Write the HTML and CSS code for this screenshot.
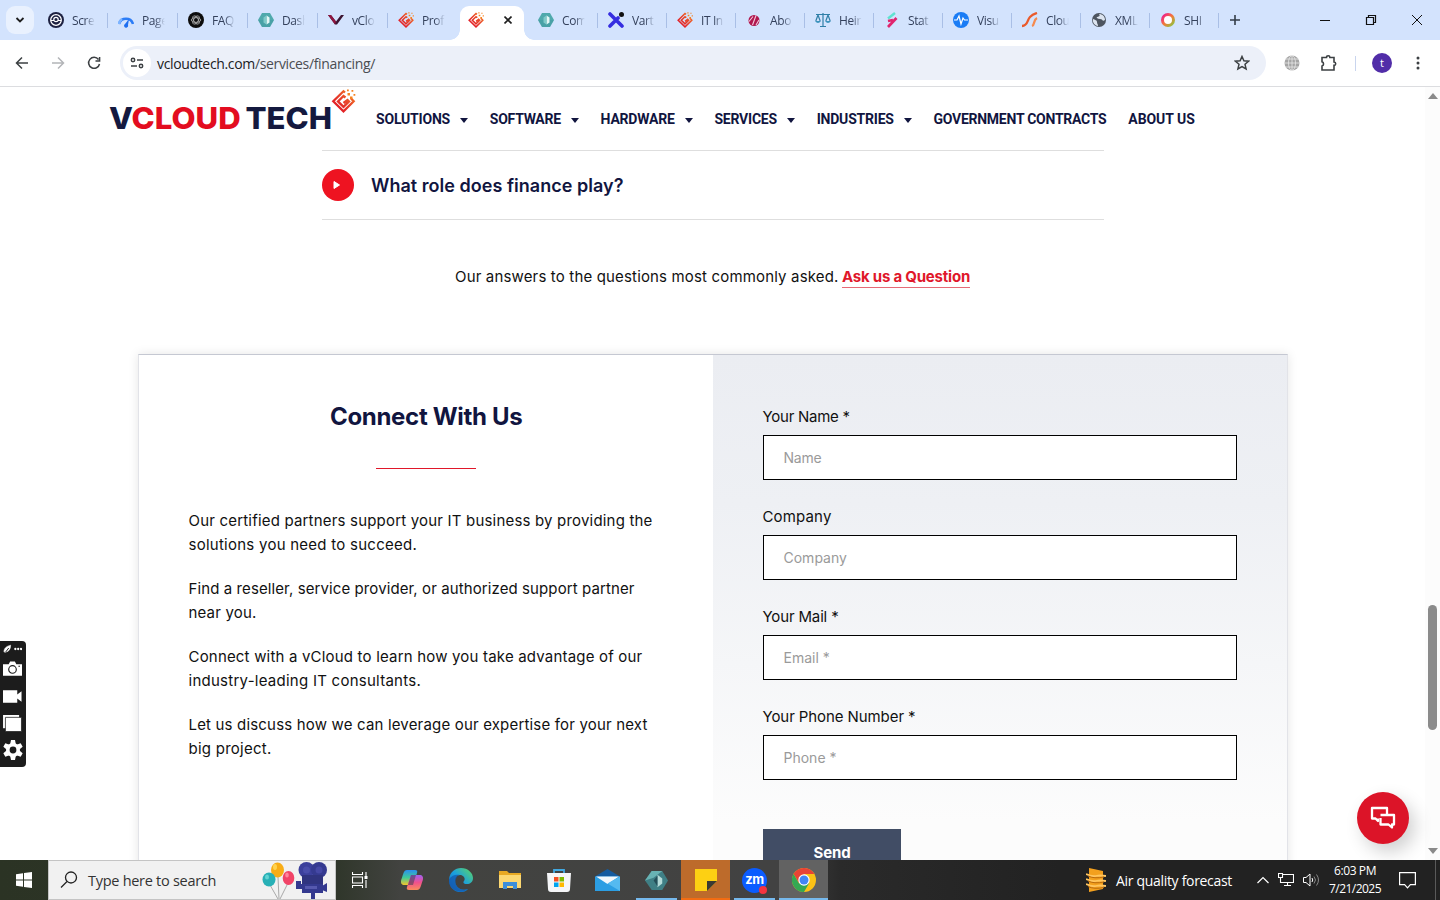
FILE: index.html
```html
<!DOCTYPE html>
<html lang="en">
<head>
<meta charset="utf-8">
<title>vCloud Tech Financing</title>
<link rel="stylesheet" href="styles.css">
</head>
<body>
<svg width="0" height="0" class="defs">
  <defs>
    <linearGradient id="gRed" gradientUnits="userSpaceOnUse" x1="4" y1="20" x2="22" y2="2"><stop offset="0" stop-color="#e01425"/><stop offset=".5" stop-color="#e8442a"/><stop offset="1" stop-color="#f58220"/></linearGradient>
    <linearGradient id="gEdge" x1="0" y1="1" x2="1" y2="0"><stop offset="0" stop-color="#0f62b8"/><stop offset=".5" stop-color="#1a9fe0"/><stop offset="1" stop-color="#5fd860"/></linearGradient>
    <linearGradient id="gCopA" x1="0" y1="0" x2="0" y2="1"><stop offset="0" stop-color="#2a8ef0"/><stop offset=".5" stop-color="#3fc99a"/><stop offset="1" stop-color="#f4c62a"/></linearGradient>
    <linearGradient id="gCopB" x1="0" y1="0" x2="0" y2="1"><stop offset="0" stop-color="#a160f2"/><stop offset=".5" stop-color="#f0508c"/><stop offset="1" stop-color="#f98b5c"/></linearGradient>
    <linearGradient id="gShi" x1="0" y1="0" x2="1" y2="1"><stop offset="0" stop-color="#ee1490"/><stop offset=".5" stop-color="#f47a3a"/><stop offset="1" stop-color="#8cc63f"/></linearGradient>
    <symbol id="vct" viewBox="0 0 24 24"><g fill="none" stroke="url(#gRed)" stroke-width="2.300"><path d="M13.500 3.500 12 2.200 1.800 12.300 12 22.300 22.200 12.300 19.500 9.500"/><path d="M14 8.500 12 7 6.500 12.400 12 17.800 17.500 12.400 16 11l-4 3"/></g><path fill="#f58220" d="M16 4h2.500v2.500H16zM20 1h1.800v1.800H20zM18.500 7.500H21V10h-2.500zM22 5h1.800v1.800H22zM15.500.500h1.800v1.800h-1.800z"/></symbol>
    <symbol id="hex" viewBox="0 0 16 16"><path fill="#4fa9ac" d="M4 1h8l4 7-4 7H4L0 8z"/><path fill="#3c8f98" d="M0 8l4 7h8l4-7z" opacity=".3"/><path fill="#e5f7f5" d="M8.500 3.500 11.500 5.500v5l-3 2z"/><path fill="#80c9c8" d="M8.500 3.500 5.500 5.500v5l3 2z"/></symbol>
  </defs>
</svg>
<div class="screen">
  <div class="tabstrip">
    <div class="tabsearch"><svg width="10" height="6" viewBox="0 0 10 6"><path d="m1.500 1 3.500 3.500L8.500 1" fill="none" stroke="#1f1f1f" stroke-width="1.800"/></svg></div>
    <div class="tab"><svg viewBox="0 0 16 16"><circle cx="8" cy="8" r="8" fill="#1d2141"/><circle cx="8" cy="8" r="5.300" fill="none" stroke="#fff" stroke-width="1.300"/><circle cx="8" cy="7.500" r="2.200" fill="none" stroke="#fff" stroke-width="1.200"/><path d="M3 8.500h3M10 8.500h3" stroke="#fff"/></svg><span>Scre</span></div>
    <div class="tab"><svg viewBox="0 0 16 16"><path d="M1 12a7.300 7.300 0 0 1 14 0" fill="none" stroke="#2c7df7" stroke-width="2.600"/><path d="M1 12a7 7 0 0 1 3-5" fill="none" stroke="#7db4ff" stroke-width="2.600"/><path d="m11 7-1 6a2 2 0 1 1-3-1z" fill="#1f6ff0"/></svg><span>Page</span></div>
    <div class="tab"><svg viewBox="0 0 16 16"><circle cx="8" cy="8" r="8" fill="#0d0d0d"/><g fill="none" stroke="#c8c8c8" stroke-width=".7"><ellipse cx="8" cy="8" rx="4.700" ry="2.300"/><ellipse cx="8" cy="8" rx="4.700" ry="2.300" transform="rotate(60 8 8)"/><ellipse cx="8" cy="8" rx="4.700" ry="2.300" transform="rotate(120 8 8)"/></g></svg><span>FAQ</span></div>
    <div class="tab"><svg><use href="#hex"/></svg><span>Dash</span></div>
    <div class="tab"><svg viewBox="0 0 16 16"><path d="M0 3h3l5 6.500L13 3h3L9 12.500H7z" fill="#3c1532"/><path d="M0 3h3l5 6.500-1 3z" fill="#8e1640"/></svg><span>vClo</span></div>
    <div class="tab"><svg><use href="#vct"/></svg><span>Prof</span></div>
    <div class="tab active"><div class="shape"><svg><use href="#vct"/></svg><svg class="x" viewBox="0 0 8 8"><path d="m.5.500 7 7m0-7-7 7" stroke="#1f1f1f" stroke-width="1.600"/></svg></div></div>
    <div class="tab"><svg><use href="#hex"/></svg><span>Com</span></div>
    <div class="tab n"><svg viewBox="0 0 16 16"><path d="m2 2 12 12M10 6 2 14" stroke="#352de0" stroke-width="3.600" stroke-linecap="round"/><circle cx="13.500" cy="2.500" r="2.500" fill="#111"/></svg><span>Vart</span></div>
    <div class="tab n"><svg><use href="#vct"/></svg><span>IT In</span></div>
    <div class="tab n"><svg viewBox="0 0 16 16"><circle cx="8" cy="8.500" r="5.500" fill="#b0174e"/><path d="m3 9.500 4-5M6.500 13l3.500-9.500M10 13l3-5" stroke="#f2c9dc" stroke-width="1.100" fill="none"/></svg><span>Abo</span></div>
    <div class="tab n"><svg viewBox="0 0 16 16"><g fill="none" stroke="#2f7fa8" stroke-width="1.200"><path d="M8 1v13M1 2.500h14M5 14.500h6M3 3 .8 9M3 3l2.200 6M13 3l-2.200 6M13 3l2.200 6"/></g><path d="M0 9h6q-3 4-6 0zM10 9h6q-3 4-6 0z" fill="#3b93bd"/></svg><span>Heir</span></div>
    <div class="tab n"><svg viewBox="0 0 16 16"><path d="M11 1 4 6.500" stroke="#5fe3d0" stroke-width="2.500"/><path d="M4 9 9 8M12.500 6 4 15" stroke="#e0246e" stroke-width="2.700"/></svg><span>Stat</span></div>
    <div class="tab n"><svg viewBox="0 0 16 16"><circle cx="8" cy="8" r="8" fill="#1a7cf5"/><path d="M1 8h3l2-4 2 8 2-6 1.500 2H15" fill="none" stroke="#fff" stroke-width="1.200"/></svg><span>Visu</span></div>
    <div class="tab n"><svg viewBox="0 0 16 16"><path d="M0 14c6 0 5-6 8-9s4-3 7-4" fill="none" stroke="#ea5a2b" stroke-width="2.300"/><path d="M10 14c3-1 1-6 5-8" fill="none" stroke="#f58a4e" stroke-width="2.300"/></svg><span>Clou</span></div>
    <div class="tab n"><svg viewBox="0 0 16 16"><circle cx="8" cy="8" r="7" fill="#4d5560"/><path d="M8 2c2 2-1 3-2 3s0 2 3 2 2 3 5 1c0-4-3-6-6-6zM2 7c2 1 4 1 4 3s1 2 1 4C4 14 1 10 2 7z" fill="#dce4ef"/></svg><span>XML</span></div>
    <div class="tab n"><svg viewBox="0 0 16 16"><circle cx="8" cy="8" r="5.500" fill="#fff" stroke="url(#gShi)" stroke-width="3"/></svg><span>SHI</span></div>
    <svg class="plus" viewBox="0 0 10 10"><path d="M5 0v10M0 5h10" stroke="#333c48" stroke-width="1.600"/></svg>
    <div class="wincontrols">
      <svg viewBox="0 0 12 12"><path d="M1 6.500h10" stroke="#111"/></svg>
      <svg viewBox="0 0 12 12"><path d="M1.500 3.500h7v7h-7zM3.500 3.500v-2h7v7h-2" fill="none" stroke="#111" stroke-width="1.200"/></svg>
      <svg viewBox="0 0 12 12"><path d="m1 1 10 10M11 1 1 11" stroke="#111"/></svg>
    </div>
  </div>
  <div class="toolbar">
    <div class="navbtns">
      <svg viewBox="0 0 14 14"><path d="M13 7H2m5-5.500L1.500 7 7 12.500" fill="none" stroke="#3c4043" stroke-width="1.500"/></svg>
      <svg viewBox="0 0 14 14"><path d="M1 7h11M7 1.500 12.500 7 7 12.500" fill="none" stroke="#b3b5b8" stroke-width="1.500"/></svg>
      <svg viewBox="0 0 14 14"><path d="M11.500 3.500A5.500 5.500 0 1 0 12.500 8M12.600 1v4H8.500" fill="none" stroke="#3c4043" stroke-width="1.500"/></svg>
    </div>
    <div class="omnibox">
      <div class="tune"><svg width="14" height="12" viewBox="0 0 14 12"><g fill="none" stroke="#3c4043" stroke-width="1.500"><circle cx="3" cy="3" r="1.700"/><path d="M7 3h6M1 9h6"/><circle cx="11" cy="9" r="1.700"/></g></svg></div>
      <span class="url"><b>vcloudtech.com</b>/services/financing/</span>
      <svg class="star" viewBox="0 0 16 16"><path d="m8 1.500 1.900 4.300 4.700.4-3.600 3.100 1.100 4.600L8 11.500l-4.100 2.400L5 9.300 1.400 6.200l4.700-.4z" fill="none" stroke="#3c4043" stroke-width="1.500"/></svg>
    </div>
    <div class="exts">
      <svg class="globe" viewBox="0 0 16 16"><circle cx="8" cy="8" r="7.500" fill="#a5a5a5"/><g fill="none" stroke="#e9e9e9" stroke-width=".8"><ellipse cx="8" cy="8" rx="3.500" ry="7.500"/><path d="M8 0v16M0 8h16M1 4h14M1 12h14"/></g></svg>
      <svg class="puzzle" viewBox="0 0 18 18"><path d="M2 3.500h4.500a1.700 1.700 0 0 1 3.400 0H14v4.500a1.700 1.700 0 0 1 0 3.400V16H2v-4a2.200 2.200 0 0 0 0-4.200z" fill="none" stroke="#3c4043" stroke-width="1.600"/></svg>
      <i class="vbar"></i>
      <div class="avatar">t</div>
      <svg class="dots" viewBox="0 0 4 14"><g fill="#3c4043"><circle cx="2" cy="2" r="1.500"/><circle cx="2" cy="7" r="1.500"/><circle cx="2" cy="12" r="1.500"/></g></svg>
    </div>
  </div>
  <div class="viewport">
    <main class="page">
      <header class="site">
        <svg class="logo" width="248" height="44" viewBox="0 0 248 44">
          <text class="wordmark" x="0" y="40" textLength="223" lengthAdjust="spacingAndGlyphs"><tspan class="navy">V</tspan><tspan class="red">CLOUD</tspan><tspan class="navy" dx="-2"> TECH</tspan></text>
          <use href="#vct" x="222" y="0" width="25" height="24"/>
        </svg>
        <nav>
          <a><span class="n1">SOLUTIONS</span><i></i></a>
          <a><span class="n2">SOFTWARE</span><i></i></a>
          <a><span class="n3">HARDWARE</span><i></i></a>
          <a><span class="n4">SERVICES</span><i></i></a>
          <a><span class="n5">INDUSTRIES</span><i></i></a>
          <a><span class="n6">GOVERNMENT CONTRACTS</span></a>
          <a><span class="n7">ABOUT US</span></a>
        </nav>
      </header>
      <section class="faq">
        <div class="play"><svg width="8" height="10" viewBox="0 0 8 10"><path d="M1 1.500v7L6.500 5z" fill="#fff" stroke="#fff" stroke-linejoin="round"/></svg></div>
        <h3>What role does finance play?</h3>
      </section>
      <p class="ask"><span>Our answers to the questions most commonly asked.</span><a>Ask us a Question</a></p>
      <section class="card">
        <div class="left">
          <h2>Connect With Us</h2>
          <hr>
          <p><span class="l1">Our certified partners support your IT business by providing the</span><br><span class="l2">solutions you need to succeed.</span></p>
          <p><span class="l3">Find a reseller, service provider, or authorized support partner</span><br><span class="l4">near you.</span></p>
          <p><span class="l1">Connect with a vCloud to learn how you take advantage of our</span><br><span class="l2">industry-leading IT consultants.</span></p>
          <p><span class="l4">Let us discuss how we can leverage our expertise for your next</span><br><span class="l2">big project.</span></p>
        </div>
        <form class="right">
          <label class="f1">Your Name *</label><div class="field f1">Name</div>
          <label class="f2">Company</label><div class="field">Company</div>
          <label class="f3">Your Mail *</label><div class="field">Email *</div>
          <label class="f4">Your Phone Number *</label><div class="field">Phone *</div>
          <div class="send">Send</div>
        </form>
      </section>
    </main>
    <div class="scrollbar"><i class="up"></i><i class="thumb"></i><i class="down"></i></div>
    <div class="chat"><svg width="26" height="24" viewBox="0 0 26 24"><g fill="none" stroke="#fff" stroke-width="2.300" stroke-linejoin="round"><path d="M8 12.500v2.500L5.500 12.500H2V2h15v6"/><path d="M10.500 9H24v9.500h-2v3l-3.500-3h-8V12"/></g></svg></div>
  </div>
  <div class="recorder">
    <svg viewBox="0 0 20 10" class="r1"><path d="M1 8c0-4 3-6 7-7 0 4-2 7-5 7zM2 9l4-5" fill="#fff" stroke="#fff" stroke-width=".6"/><path d="m3 8 3-4" stroke="#1c1c1c"/><g fill="#fff"><circle cx="13" cy="5" r="1.200"/><circle cx="16" cy="5" r="1.200"/><circle cx="19" cy="5" r="1.200"/></g></svg>
    <svg viewBox="0 0 20 16"><path d="M0 3h6l1.500-3h5L14 3h6v12H0z" fill="#fff"/><circle cx="10" cy="8.500" r="4" fill="none" stroke="#1c1c1c" stroke-width="1.200"/><circle cx="17" cy="5" r=".8" fill="#1c1c1c"/></svg>
    <svg viewBox="0 0 20 16"><path d="M0 2h15v4.500L19.500 3v11L15 10.500V15H0z" fill="#fff"/></svg>
    <svg viewBox="0 0 20 18" class="r4"><path d="M0 0h17v14H0z" fill="#fff"/><path d="M2.500 2.500h17v15h-17z" fill="#fff" stroke="#1c1c1c" stroke-width=".8"/></svg>
    <svg viewBox="0 0 20 20" class="r5"><g fill="#fff"><circle cx="10" cy="10" r="7"/><path d="M8 0h4l1 5H7zM8 20h4l1-5H7z"/><path d="M8 0h4l1 5H7zM8 20h4l1-5H7z" transform="rotate(60 10 10)"/><path d="M8 0h4l1 5H7zM8 20h4l1-5H7z" transform="rotate(120 10 10)"/></g><circle cx="10" cy="10" r="3.400" fill="#1c1c1c"/></svg>
  </div>
  <footer class="taskbar">
    <div class="start"><svg width="16" height="16" viewBox="0 0 16 16"><path d="M0 2.200 7 1.200V7.500H0zM8 1 16 0v7.500H8zM0 8.500h7v6.300L0 13.800zM8 8.500h8V16l-8-1z" fill="#fff"/></svg></div>
    <div class="search">
      <svg width="18" height="18" viewBox="0 0 18 18"><circle cx="11" cy="6.500" r="5.500" fill="none" stroke="#222" stroke-width="1.300"/><path d="m7 10.500-6 6" stroke="#222" stroke-width="1.300"/></svg>
      <span>Type here to search</span>
      <svg class="party" width="66" height="38" viewBox="0 0 66 38">
        <path d="m16 16 1 22M8 24l8 14M26 22l-8 16" fill="none" stroke="#a9a9a9"/>
        <ellipse cx="15.500" cy="9" rx="6.500" ry="7.500" fill="#f8ad16"/><ellipse cx="7" cy="18.500" rx="6.500" ry="7" fill="#28b0b6"/><ellipse cx="26.500" cy="17" rx="5.800" ry="7" fill="#f14468"/>
        <ellipse cx="13" cy="6" rx="2" ry="3" fill="#ffd34e"/><ellipse cx="5" cy="16" rx="2" ry="2.500" fill="#62d4d3"/><ellipse cx="25" cy="14" rx="1.800" ry="2.500" fill="#ff869c"/>
        <path d="M34 20h5v3h22v9H40v-4h-6zM60 25l5-3v9l-5-2zM49 31h4v7h-4z" fill="#34398f"/><circle cx="44.500" cy="9" r="8" fill="#3c409c"/><circle cx="57" cy="9" r="8" fill="#353a90"/><path d="M40 14h21v9H40z" fill="#30347f"/><circle cx="44.500" cy="9" r="3.500" fill="#4a4eab"/><circle cx="57" cy="9" r="3.500" fill="#4548a5"/><path d="M43 25h12v3H43z" fill="#5659ae"/>
      </svg>
    </div>
    <div class="slot tv"><svg width="16" height="18" viewBox="0 0 16 18"><g fill="none" stroke="#fff" stroke-width="1.100"><path d="M.5 1v2.500h10V1M.5 17v-2.500h10V17M.5 6h10v6H.5zM14 1v4M14 9v8"/></g><path d="M12.500 5h3v3h-3z" fill="#fff"/></svg></div>
    <div class="slot"><svg width="24" height="24" viewBox="0 0 24 24"><path d="M7 2h8q3 0 2 3l-4 12H4.500C1.500 17 .5 15 1.200 12L3.500 5Q4.500 2 7 2z" fill="url(#gCopA)"/><path d="M17 22H9q-3 0-2-3l4-12h8.500c3 0 4 2 3.300 5l-2.300 7q-1 3-3.500 3z" fill="url(#gCopB)"/><path d="M11 7h5l-3 10H8z" fill="#3b3f52" opacity=".55"/></svg></div>
    <div class="slot"><svg width="24" height="24" viewBox="0 0 24 24"><path d="M0 11C1 4 6 0 12 0c7 0 12 5 12 10 0 4-3 6-6 6-4 0-4-2-3-3 2-3-1-6-4-6-5 0-6 6-4 10 2 4 7 6 12 4-5 6-19 4-19-10z" fill="url(#gEdge)"/><path d="M7 11c-2 6 3 13 12 10-7 7-21 0-19-10 3-4 7-5 11-4-2 0-3 1-4 4z" fill="#1458ae" opacity=".75"/></svg></div>
    <div class="slot"><svg width="22" height="20" viewBox="0 0 22 20"><path d="M0 1h8l2 2h12v15H0z" fill="#e8a923"/><path d="M0 5h22v13H0z" fill="#fcd872"/><path d="M4 19v-7h14v7h-4v-3H8v3z" fill="#3d8fdb"/></svg></div>
    <div class="slot"><svg width="24" height="24" viewBox="0 0 24 24"><path d="M7 6V2h10v4" fill="none" stroke="#41a8e0" stroke-width="1.800"/><path d="M0 5h24l-1 16q0 3-3 3H4q-3 0-3-3z" fill="#f5f6f8"/><path d="M7 9h4.500v4.500H7z" fill="#f25022"/><path d="M12.500 9H17v4.500h-4.500z" fill="#7fba00"/><path d="M7 14.500h4.500V19H7z" fill="#00a4ef"/><path d="M12.500 14.500H17V19h-4.500z" fill="#ffb900"/></svg></div>
    <div class="slot"><svg width="25" height="22" viewBox="0 0 25 22"><path d="M0 7.500 12.500 0 25 7.500V22H0z" fill="#155b9f"/><path d="M0 22V7.500h25V22z" fill="#2c9ee3"/><path d="M1 7.500h23L12.500 15z" fill="#f2f7fb"/><path d="M25 7.500V22L12.500 14.500z" fill="#55baf0"/></svg></div>
    <div class="slot run"><svg width="23" height="23" viewBox="0 0 24 24"><path d="M7 2h11l6 10-6 10H7L0 12z" fill="#3f7f85"/><path d="m0 12 7-10h11L9 9z" fill="#68b3b4"/><path d="m13 6 5 4v5l-5 4z" fill="#b5dbd9"/><path d="m13 7-4 5 4 6z" fill="#244f59"/></svg></div>
    <div class="slot sticky"><svg width="22" height="22" viewBox="0 0 22 22"><path d="M0 0h22v12L12 22H0z" fill="#fdd013"/><path d="M12 22V12h10z" fill="#3b3a32"/></svg></div>
    <div class="slot run"><div class="zm">zm<i></i></div></div>
    <div class="slot chrome"><svg width="24" height="24" viewBox="0 0 24 24"><circle cx="12" cy="12" r="12" fill="#fbc116"/><path d="M1.600 6A12 12 0 0 1 22.400 6H12L7 15z" fill="#e94335"/><path d="M1.600 6A12 12 0 0 0 12 24l5.200-9-5.200 2-5.200-2z" fill="#34a853"/><circle cx="12" cy="12" r="5.700" fill="#fff"/><circle cx="12" cy="12" r="4.500" fill="#4285f4"/></svg></div>
    <div class="weather"><svg width="20" height="24" viewBox="0 0 20 24"><path d="m3 0 14 3v18L3 24z" fill="#f3a01e"/><path d="M0 6q6 3 10 2t10 0M0 11q6 3 10 2t10 0M0 16q6 3 10 2t10 0" stroke="#ffc661" stroke-width="1.800" fill="none"/><path d="M2 8q6 3 16 1M2 13q6 3 16 1M2 18.500q6 3 16 1" stroke="#b96a0d" fill="none"/></svg><span>Air quality forecast</span></div>
    <div class="tray">
      <svg width="12" height="8" viewBox="0 0 12 8"><path d="m.5 7 5.500-5.500L11.500 7" fill="none" stroke="#fff" stroke-width="1.200"/></svg>
      <svg width="16" height="14" viewBox="0 0 16 14"><path d="M4.500 1.500h11v8h-11M9.500 9.500v3M6 12.500h7M.5.500h4v4h-4zM2.500 4.500v5h2" fill="none" stroke="#fff" stroke-width="1.100"/></svg>
      <svg width="17" height="14" viewBox="0 0 17 14"><path d="M.5 4.500h2.500l4-3.500v12l-4-3.500H.5z" fill="none" stroke="#fff"/><path d="M9 5q1.500 2 0 4" fill="none" stroke="#fff"/><path d="M11 3.500q3 3.500 0 7M13.500 1.500q4 5.500 0 11" fill="none" stroke="#888"/></svg>
    </div>
    <div class="clock"><span class="time">6:03 PM</span><br><span class="date">7/21/2025</span></div>
    <svg class="notif" width="17" height="17" viewBox="0 0 17 17"><path d="M.6.600h15.800v12h-5L8.500 15.800 5.600 12.600h-5z" fill="none" stroke="#fff" stroke-width="1.200"/></svg>
    <i class="peek"></i>
  </footer>
</div>
</body>
</html>
```
FILE: styles.css
```css
* { box-sizing: border-box; }
body { margin: 0; }
.defs { position: absolute; }
.screen { width: 1440px; height: 900px; display: flex; flex-direction: column; overflow: hidden; position: relative; background: #fff; font-family: "Open Sans", "Noto Sans", sans-serif; }

.tabstrip { height: 40px; flex: none; display: flex; align-items: center; background: #d3e3fd; padding-left: 6px; }
.tabsearch { width: 28px; height: 28px; margin-right: 4px; border-radius: 9px; background: #e9f1fe; display: flex; align-items: center; justify-content: center; }
.tab { width: 70px; height: 40px; flex: none; display: flex; align-items: center; padding-left: 10px; position: relative; }
.tab.n { width: 69px; }
.tab svg { width: 16px; height: 16px; flex: none; }
.tab span { width: 23px; margin-left: 8px; overflow: hidden; white-space: nowrap; font-size: 12px; letter-spacing: -.4px; color: #34415c; -webkit-mask-image: linear-gradient(90deg, #000 55%, transparent); mask-image: linear-gradient(90deg, #000 55%, transparent); }
.tab::after { content: ""; position: absolute; right: 0; top: 13px; width: 1px; height: 15px; background: #a9bfe6; }
.tab:nth-child(7)::after, .tab.active::after { display: none; }
.tab.active { padding-left: 2px; align-items: flex-end; }
.shape { width: 64px; height: 34px; background: #fff; border-radius: 9px 9px 0 0; display: flex; align-items: center; padding: 0 12px 6px 8px; justify-content: space-between; position: relative; }
.shape::before, .shape::after { content: ""; position: absolute; bottom: 0; width: 10px; height: 10px; }
.shape::before { left: -10px; background: radial-gradient(circle at 0 0, transparent 9.500px, #fff 10px); }
.shape::after { right: -10px; background: radial-gradient(circle at 100% 0, transparent 9.500px, #fff 10px); }
.shape .x { width: 8px; height: 8px; }
.plus { width: 10px; height: 10px; margin-left: 11px; }
.wincontrols { margin-left: auto; display: flex; gap: 34px; padding-right: 17px; }
.wincontrols svg { width: 12px; height: 12px; }

.toolbar { height: 47px; flex: none; display: flex; align-items: center; background: #fff; border-bottom: 1px solid #dcdde0; padding-left: 15px; }
.navbtns { display: flex; gap: 22px; width: 105px; }
.navbtns svg { width: 14px; height: 14px; }
.omnibox { width: 1146px; height: 34px; border-radius: 17px; background: #ecf0f9; display: flex; align-items: center; padding: 0 16px 0 3px; }
.tune { width: 28px; height: 28px; border-radius: 14px; background: #fff; display: flex; align-items: center; justify-content: center; }
.url { margin-left: 6px; font-size: 14px; letter-spacing: -.346px; color: #4a4d52; white-space: nowrap; }
.url b { font-weight: 400; color: #202124; }
.star { width: 16px; height: 16px; margin-left: auto; }
.exts { display: flex; align-items: center; }
.globe { width: 16px; height: 16px; margin-left: 18px; }
.puzzle { width: 18px; height: 18px; margin-left: 20px; }
.vbar { width: 1px; height: 15px; background: #c9d5ee; margin-left: 17px; }
.avatar { width: 20px; height: 20px; border-radius: 10px; background: #512da8; color: #fff; font-size: 11px; line-height: 19px; text-align: center; margin-left: 16px; }
.dots { width: 4px; height: 14px; margin-left: 24px; }

.viewport { height: 773px; flex: none; display: flex; position: relative; overflow: hidden; }
.page { width: 1425px; height: 773px; overflow: hidden; font-family: Inter, sans-serif; color: #111; }
.site { height: 63px; display: flex; padding-left: 109px; }
.logo { flex: none; margin-top: 2px; }
.wordmark { font: 800 30px Inter, sans-serif; white-space: pre; }
.navy { fill: #14193f; }
.red { fill: #e30d20; }
nav { display: flex; align-items: center; gap: 21.800px; margin-left: 19px; font: 700 14px/16px Roboto, sans-serif; color: #11153f; white-space: nowrap; }
nav a { display: flex; align-items: center; }
nav i { margin: 3px 0 0 10px; border: 4.500px solid transparent; border-top: 5px solid #11153f; border-bottom: 0; }
.n1 { letter-spacing: -.196px; }
.n2 { letter-spacing: -.26px; }
.n3 { letter-spacing: -.211px; }
.n4, .n5 { letter-spacing: -.217px; }
.n6 { letter-spacing: -.255px; }
.n7 { letter-spacing: -.045px; }
.faq { width: 782px; height: 70px; margin-left: 322px; border: solid #dedede; border-width: 1px 0; display: flex; align-items: center; gap: 17px; }
.play { width: 32px; height: 32px; border-radius: 16px; background: #ee1321; display: flex; align-items: center; justify-content: center; padding-right: 2px; }
.faq h3 { margin: 0; font-size: 18px; font-weight: 600; color: #11153f; letter-spacing: .03px; }
.ask { margin: 45px 0 0 455px; font-size: 15px; line-height: 24px; white-space: nowrap; display: flex; gap: 3.500px; letter-spacing: .161px; }
.ask a { color: #e0172a; font-weight: 700; border-bottom: 1px solid #e66a76; height: 23px; letter-spacing: -.216px; }
.card { width: 1150px; height: 600px; margin: 65px 0 0 138px; border: 1px solid #c5c8d2; border-color: #c5c8d2 #e2e3e8; box-shadow: 0 0 10px #0000001a; display: flex; }
.left { width: 574px; padding: 44px 49px 0 49.500px; font-size: 15px; line-height: 24px; white-space: nowrap; }
.left h2 { margin: 0; text-align: center; font-size: 24px; line-height: 36px; font-weight: 700; letter-spacing: -.309px; color: #11153f; }
.left hr { width: 100px; height: 1px; border: 0; background: #e0172a; margin: 33px auto 40px; }
.left p { margin: 0 0 20px; }
.l1 { letter-spacing: .189px; }
.l2 { letter-spacing: .256px; }
.l3 { letter-spacing: .098px; }
.l4 { letter-spacing: .176px; }
.right { flex: 1; padding: 50px 50px 0 50px; background: linear-gradient(#ebedf2, #eef0f4 25%, #fcfcfc 78%); font-size: 15px; }
.right label { display: block; height: 24px; line-height: 24px; margin-left: -.5px; }
.field { height: 45px; margin: 6px 0 25px; border: 1px solid #000; background: #fff; padding-left: 19.500px; font-size: 14px; line-height: 43px; color: #9a9a9a; }
.f1 { letter-spacing: -.25px; }
.f2 { letter-spacing: .154px; }
.f3 { letter-spacing: -.158px; }
.f4 { letter-spacing: -.087px; }
.send { width: 138px; height: 48px; margin-top: 49px; background: #414d65; color: #fff; font-weight: 700; text-align: center; line-height: 48px; letter-spacing: -.1px; }
.scrollbar { width: 15px; background: #fcfcfc; display: flex; flex-direction: column; align-items: center; padding: 6px 0; }
.scrollbar i { flex: none; }
.up { border: 5px solid transparent; border-bottom: 6px solid #8a8a8a; border-top: 0; }
.thumb { width: 9px; height: 125px; border-radius: 5px; background: #8b8b8b; margin: 506px 0 118px; }
.down { border: 5px solid transparent; border-top: 6px solid #8a8a8a; border-bottom: 0; }
.chat { position: absolute; left: 1357px; top: 705px; width: 52px; height: 52px; border-radius: 26px; background: #dc1428; box-shadow: 6px 8px 18px #00000030; display: flex; align-items: center; justify-content: center; }

.recorder { position: absolute; left: 0; top: 641px; width: 26px; height: 126px; border-radius: 0 4px 4px 0; background: #1c1c1c; display: flex; flex-direction: column; align-items: center; gap: 11px; padding: 3px 1px 0 0; }
.recorder svg { width: 19px; height: 16px; flex: none; }
.recorder .r1 { height: 10px; margin-bottom: -4px; }
.recorder .r4 { height: 17px; }
.recorder .r5 { width: 20px; height: 20px; margin-top: -3px; }

.taskbar { height: 40px; flex: none; display: flex; align-items: center; color: #fff; background: linear-gradient(90deg, #2b3324, #2f362a 335px, #424340 400px, #424242 780px, #2a2a2a 840px, #222 1060px); }
.start { width: 48px; display: flex; justify-content: center; }
.search { width: 288px; height: 40px; background: #f1f1f1; border: 1px solid #c4c4c4; display: flex; align-items: center; color: #333; font-size: 14.500px; letter-spacing: -.28px; padding-left: 11px; white-space: nowrap; }
.search span { margin-left: 10px; width: 174px; }
.slot { width: 49px; height: 40px; flex: none; display: flex; align-items: center; justify-content: center; position: relative; }
.slot.tv { width: 51px; padding-right: 3px; }
.slot.run::after, .slot.chrome::after { content: ""; position: absolute; left: 4px; right: 4px; bottom: 0; height: 2px; background: #76b9ed; }
.slot.chrome { background: #626262; }
.slot.chrome::after { left: 0; right: 0; }
.slot.sticky { background: #bd6b2b; border-bottom: 2px solid #f26c12; padding-top: 2px; }
.zm { width: 25px; height: 25px; border-radius: 13px; background: #0b5cff; font: 700 13px/23px Inter, sans-serif; text-align: center; letter-spacing: -.5px; position: relative; }
.zm i { position: absolute; right: 0; bottom: -1px; width: 8px; height: 8px; border-radius: 4px; background: #f5343f; }
.weather { margin-left: 258px; display: flex; align-items: center; gap: 10px; font-size: 14px; letter-spacing: -.313px; white-space: nowrap; }
.tray { margin-left: 25px; display: flex; align-items: center; gap: 9px; }
.clock { width: 70px; margin-left: 0; text-align: center; font-size: 12px; line-height: 18px; white-space: nowrap; }
.time { letter-spacing: -.4px; }
.date { letter-spacing: -.53px; }
.notif { margin-left: 9px; }
.peek { width: 1px; height: 40px; margin-left: 19px; background: #5a5a5a; }
```
